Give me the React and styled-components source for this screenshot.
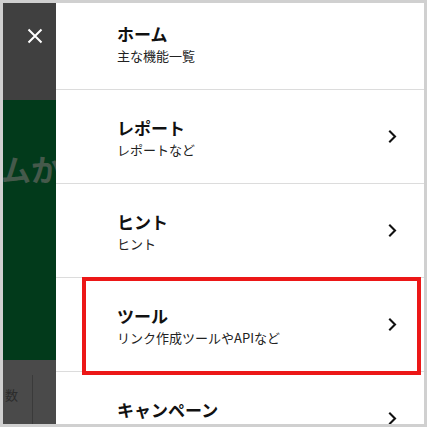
import React from 'react';
import styled, { createGlobalStyle } from 'styled-components';

const GlobalStyle = createGlobalStyle`
  html, body {
    margin: 0;
    padding: 0;
    background: #ffffff;
  }
  * {
    box-sizing: border-box;
  }
`;

const menuItems = [
  { title: 'ホーム', sub: '主な機能一覧', arrow: false },
  { title: 'レポート', sub: 'レポートなど', arrow: true },
  { title: 'ヒント', sub: 'ヒント', arrow: true },
  { title: 'ツール', sub: 'リンク作成ツールやAPIなど', arrow: true, marked: true },
  { title: 'キャンペーン', sub: 'キャンペーン情報', arrow: true },
];

function Chevron() {
  return (
    <svg width="9" height="13" viewBox="0 0 9 13" fill="none">
      <polyline points="2,1.5 7,6.5 2,11.5" stroke="#111" strokeWidth="2.1" strokeLinecap="square" />
    </svg>
  );
}

function CloseIcon() {
  return (
    <svg width="16" height="16" viewBox="0 0 16 16" fill="none">
      <path d="M1.5 1.5 L14.5 14.5 M14.5 1.5 L1.5 14.5" stroke="#fff" strokeWidth="2" />
    </svg>
  );
}

function App() {
  return (
    <Frame>
      <GlobalStyle />
      <Backdrop>
        <CloseArea>
          <CloseIcon />
        </CloseArea>
        <Hero>
          <HeroText>ムから</HeroText>
        </Hero>
        <Footer>
          <FooterCell>数</FooterCell>
          <FooterCell $last />
        </Footer>
      </Backdrop>
      <Drawer>
        <MenuList>
          {menuItems.map((item) => (
            <MenuRow key={item.title}>
              <TextBlock>
                <Title>{item.title}</Title>
                <Sub>{item.sub}</Sub>
              </TextBlock>
              {item.arrow && <Chevron />}
              {item.marked && <Highlight />}
            </MenuRow>
          ))}
        </MenuList>
      </Drawer>
    </Frame>
  );
}

const Frame = styled.div`
  width: 427px;
  height: 427px;
  border: 3px solid #d0d0d0;
  display: flex;
  overflow: hidden;
  font-family: "Noto Sans CJK JP", "Noto Sans", sans-serif;
`;

const Backdrop = styled.div`
  width: 53px;
  flex-shrink: 0;
  display: flex;
  flex-direction: column;
`;

const CloseArea = styled.div`
  height: 97px;
  background: #404040;
  display: flex;
  justify-content: flex-end;
  padding: 25px 13px 0 0;
`;

const Hero = styled.div`
  height: 260px;
  background: #023a1b;
  overflow: hidden;
  padding-top: 48px;
`;

const HeroText = styled.div`
  font-size: 30px;
  font-weight: 700;
  color: #45594b;
  white-space: nowrap;
  margin-left: -2px;
  line-height: 40px;
`;

const Footer = styled.div`
  flex: 1;
  background: #4a4a4a;
  display: flex;
  padding-top: 15px;
`;

const FooterCell = styled.div`
  width: ${(p) => (p.$last ? 'auto' : '30px')};
  flex: ${(p) => (p.$last ? 1 : 'none')};
  border-right: ${(p) => (p.$last ? 'none' : '1px solid #3a3a3a')};
  font-size: 13px;
  color: #2c2c2c;
  padding: 10px 0 0 2px;
`;

const Drawer = styled.div`
  flex: 1;
  background: #ffffff;
  overflow: hidden;
`;

const MenuList = styled.div`
  margin-top: -7px;
  display: flex;
  flex-direction: column;
`;

const MenuRow = styled.div`
  position: relative;
  height: 94px;
  flex-shrink: 0;
  border-bottom: 1px solid #dcdcdc;
  display: flex;
  align-items: center;
  padding: 0 27px 0 61px;
`;

const TextBlock = styled.div`
  flex: 1;
  align-self: flex-start;
  padding-top: 26px;
`;

const Title = styled.div`
  font-size: 17px;
  font-weight: 700;
  line-height: 24px;
  color: #111111;
`;

const Sub = styled.div`
  font-size: 13px;
  line-height: 19px;
  color: #222222;
`;

const Highlight = styled.div`
  position: absolute;
  left: 26px;
  right: 3px;
  top: -1px;
  bottom: -4px;
  border: 4px solid #ec1717;
  pointer-events: none;
`;

export default App;
